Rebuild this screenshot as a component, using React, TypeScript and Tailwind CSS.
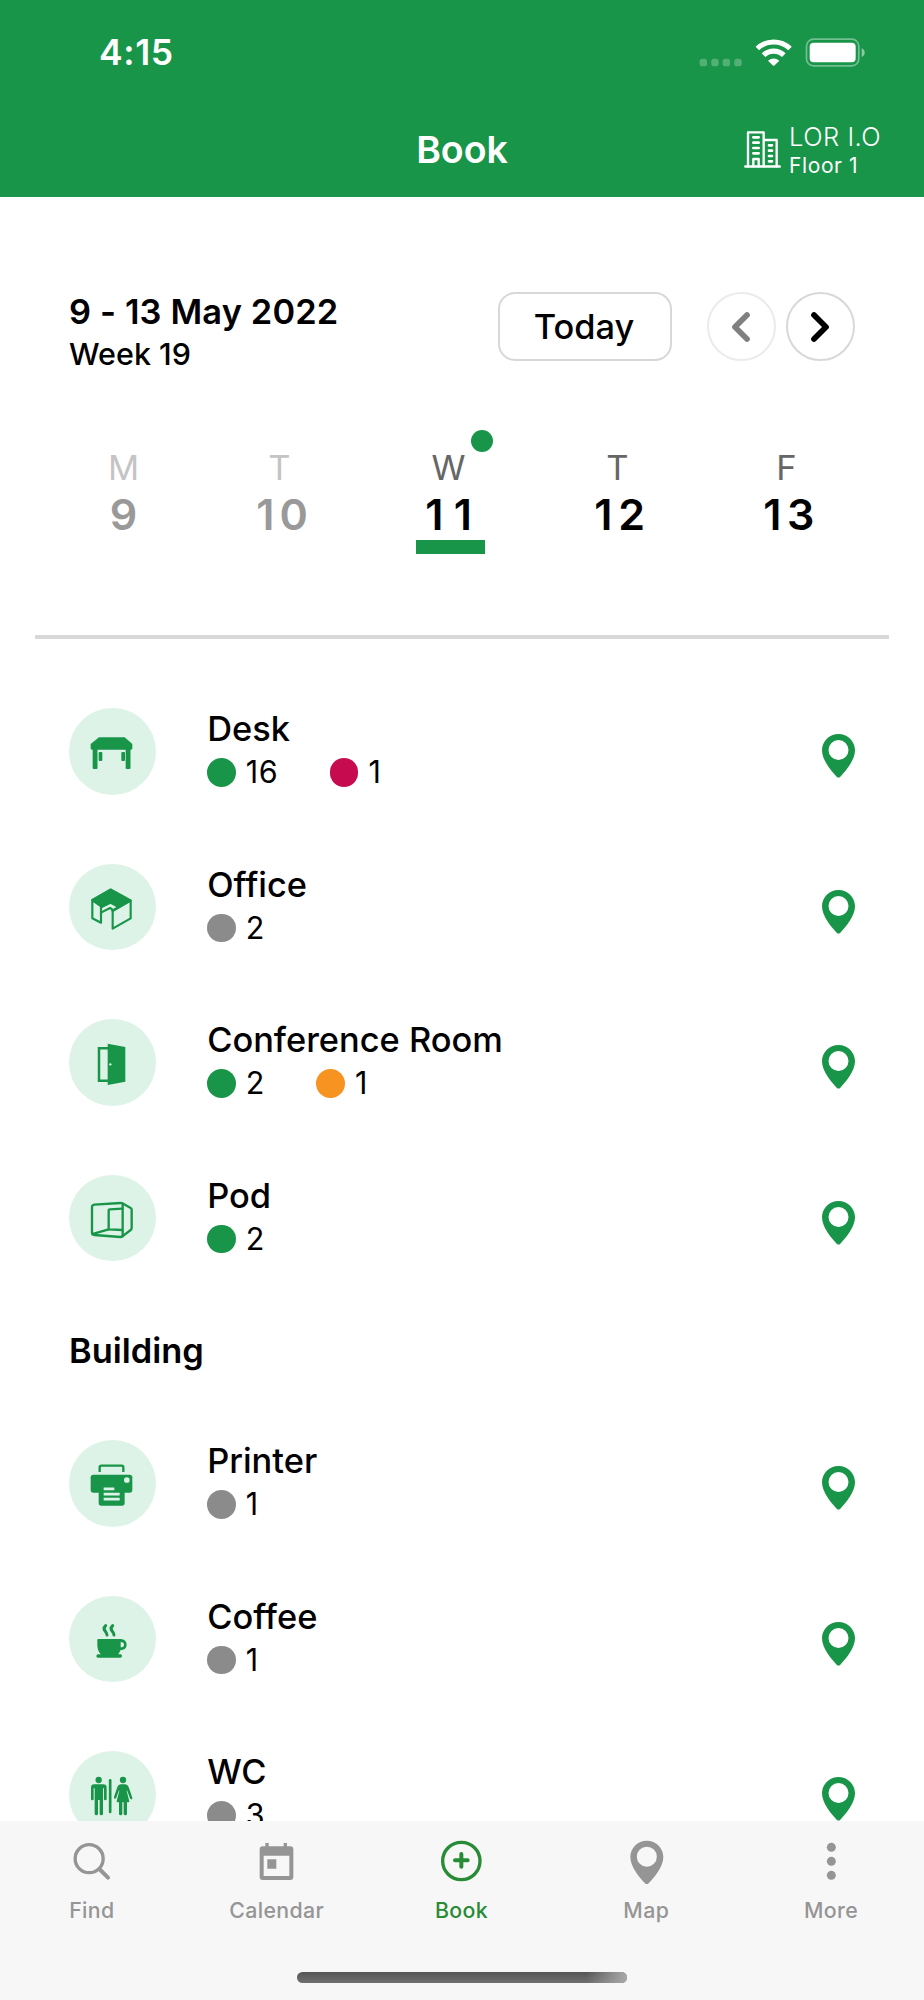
import type { ReactNode } from 'react'

const GREEN = '#189548'
const RED = '#c60b4f'
const ORANGE = '#f79321'
const GRAY = '#8b8b8b'

const PIN_PATH =
    'M49.5 0C22 0 0 22 0 49c0 30 28 62 44 79q5.500 5 11 0c16-17 44-49 44-79C99 22 77 0 49.500 0Zm0 18a30 30 0 1 1 0 60 30 30 0 0 1 0-60Z'

function DeskIcon() {
    return (
        <g fill={GREEN}>
            <path d="M90 88h77l23 20v13q0 4-4 4H69q-4 0-4-4v-13Z" />
            <rect x="71" y="120" width="14.500" height="63" rx="3" />
            <rect x="170" y="120" width="14.500" height="63" rx="3" />
            <rect x="89" y="132" width="11" height="27" rx="3" />
            <rect x="157" y="132" width="11" height="27" rx="3" />
        </g>
    )
}

function OfficeIcon() {
    return (
        <g stroke={GREEN} strokeWidth="6.500" strokeLinejoin="round" fill="none">
            <path d="M70 108 125 76l60 33-55 31 19-11-25-13-26 13-3-3Z" fill={GREEN} />
            <path d="M70 108v55l26 13v-50Z" />
            <path d="M96 151v-5l27-14 8 5" />
            <path d="M131 141v53l54-31v-53Z" />
        </g>
    )
}

function DoorIcon() {
    return (
        <>
            <path d="M118 87.500H90V185h28" stroke={GREEN} strokeWidth="7.500" fill="none" />
            <path d="m116 74 53 10v104l-53 10Z" fill={GREEN} />
            <circle cx="124" cy="136" r="3.500" fill="#def3e7" />
        </>
    )
}

function PodIcon() {
    return (
        <g stroke={GREEN} strokeWidth="7" strokeLinejoin="round" strokeLinecap="round" fill="none">
            <path d="M76 89 155 84q3 0 5 1l25 14q3 2 3 5v56q0 3-3 5l-25 19q-3 2-6 2l-78-6q-7-1-7-7V97q0-7 7-8Z" />
            <path d="M161 86v98" />
            <path d="M160 101l-38 2q-3 0-3 3v57l41 2" />
            <path d="m119 163-47 14" />
        </g>
    )
}

function PrinterIcon() {
    return (
        <>
            <path d="M92 96V82q0-5 5-5h61q5 0 5 5v14" stroke={GREEN} strokeWidth="7" fill="none" />
            <rect x="65" y="104" width="125" height="54" rx="8" fill={GREEN} />
            <rect x="89" y="130" width="78" height="67" rx="8" fill={GREEN} />
            <circle cx="173.500" cy="120" r="8.500" fill="#def3e7" />
            <path d="M104 146.500h32M104 162.500h48M104 177.500h48" stroke="#def3e7" strokeWidth="8" />
        </>
    )
}

function CoffeeIcon() {
    return (
        <>
            <path d="M88 129h67q18 2 18 17t-19 17q-2 7-6 12v3H98q-13-12-13-30v-16q0-3 3-3Z" fill={GREEN} />
            <path d="M155 138q10 0 10 8t-10 8Z" fill="#def3e7" />
            <path d="M87 180h67" stroke={GREEN} strokeWidth="10" strokeLinecap="round" />
            <path
                d="M110 89c-6 6-7 11-1 17q5 5 5 11M131 89c-6 6-7 11-1 17q5 5 5 11"
                stroke={GREEN}
                strokeWidth="9"
                strokeLinecap="round"
                fill="none"
            />
        </>
    )
}

function WcIcon() {
    return (
        <g fill={GREEN}>
            <circle cx="89" cy="87" r="9.500" />
            <path d="M76 100h26q11 0 11 10v35q0 3-4 3t-4-3v-33h-3v76q0 5-5 5t-5-5v-41h-5v41q0 5-5 5t-5-5v-76h-3v33q0 3-4 3t-4-3v-35q0-10 10-10Z" />
            <rect x="119.500" y="84" width="8" height="103" rx="4" />
            <circle cx="162" cy="87" r="9.500" />
            <path d="M155 100h14q7 0 10 8l11 32q1 4-2 5t-5-3l-9-24-1 1 8 32q0 3-3 3h-4v34q0 5-5 5t-5-5v-34h-4v34q0 5-5 5t-5-5v-34h-4q-3 0-3-3l8-32-1-1-8 22q-2 4-5 3t-2-5l10-30q3-8 10-8Z" />
        </g>
    )
}

interface Status {
    color: string
    count: number
}

interface Resource {
    name: string
    icon: ReactNode
    statuses: Status[]
}

const floorResources: Resource[] = [
    { name: 'Desk', icon: <DeskIcon />, statuses: [{ color: GREEN, count: 16 }, { color: RED, count: 1 }] },
    { name: 'Office', icon: <OfficeIcon />, statuses: [{ color: GRAY, count: 2 }] },
    { name: 'Conference Room', icon: <DoorIcon />, statuses: [{ color: GREEN, count: 2 }, { color: ORANGE, count: 1 }] },
    { name: 'Pod', icon: <PodIcon />, statuses: [{ color: GREEN, count: 2 }] },
]

const buildingResources: Resource[] = [
    { name: 'Printer', icon: <PrinterIcon />, statuses: [{ color: GRAY, count: 1 }] },
    { name: 'Coffee', icon: <CoffeeIcon />, statuses: [{ color: GRAY, count: 1 }] },
    { name: 'WC', icon: <WcIcon />, statuses: [{ color: GRAY, count: 3 }] },
]

const days = [
    { letter: 'M', date: '9', past: true },
    { letter: 'T', date: '10', past: true },
    { letter: 'W', date: '11', selected: true },
    { letter: 'T', date: '12' },
    { letter: 'F', date: '13' },
]

function ResourceRow({ resource }: { resource: Resource }) {
    return (
        <li className="flex h-[155.5px] items-start">
            <div className="size-[86.67px] shrink-0 rounded-full bg-[#def3e7]">
                <svg viewBox="0 0 260 260" className="size-full">
                    {resource.icon}
                </svg>
            </div>
            <div className="ml-[51.500px] flex-1">
                <h3 className="text-[34.4px] leading-[42px] font-medium">{resource.name}</h3>
                <div className="flex h-[43px] items-center gap-[51.500px]">
                    {resource.statuses.map((status) => (
                        <div key={status.color} className="flex items-center gap-[10px]">
                            <span className="mt-[2px] size-[28.5px] rounded-full" style={{ background: status.color }} />
                            <span className="text-[30.5px] leading-[43px] tracking-[0.7px]">{status.count}</span>
                        </div>
                    ))}
                </div>
            </div>
            <svg viewBox="0 0 99 132" className="mt-[26px] h-[44px] w-[33px]" fill={GREEN}>
                <path d={PIN_PATH} />
            </svg>
        </li>
    )
}

const tabs = [
    {
        label: 'Find',
        icon: (
            <g fill="none" stroke="currentColor" strokeLinecap="round">
                <circle cx="57.500" cy="56" r="42" strokeWidth="10" />
                <path d="m88 87 26 26" strokeWidth="12" />
            </g>
        ),
    },
    {
        label: 'Calendar',
        icon: (
            <path
                fillRule="evenodd"
                d="M31 9h10v10h45V9h10v10h10q9 0 9 9v83q0 9-9 9H23q-9 0-9-9V28q0-9 9-9h8ZM26 47v61h77V47Zm11 11h27v28H37Z"
            />
        ),
    },
    {
        label: 'Book',
        active: true,
        icon: (
            <g fill="none" stroke="currentColor">
                <circle cx="64" cy="63" r="56" strokeWidth="10" />
                <path d="M64 42v38M45 61h38" strokeWidth="12" strokeLinecap="round" />
            </g>
        ),
    },
    { label: 'Map', icon: <path d={PIN_PATH} transform="translate(16 2)" /> },
    {
        label: 'More',
        icon: (
            <>
                <circle cx="64" cy="22" r="13.500" />
                <circle cx="64" cy="64" r="13.500" />
                <circle cx="64" cy="106" r="13.500" />
            </>
        ),
    },
]

export default function App() {
    return (
        <div className="flex h-[2000px] w-[924px] flex-col overflow-hidden bg-white font-['Inter',sans-serif] text-black">
            {/* Header */}
            <header className="h-[197px] shrink-0 bg-[#189548] text-white">
                <div className="flex h-[106px] items-center justify-between pr-[56px] pl-[99px]">
                    <span className="text-[35.5px] font-semibold tracking-[0.6px]">4:15</span>
                    <svg viewBox="700 110 520 90" className="mb-[3px] h-[30px] w-[173.33px]" fill="#fff">
                        <g opacity=".25">
                            <rect x="714" y="175" width="22" height="23" rx="8" />
                            <rect x="749" y="175" width="22" height="23" rx="8" />
                            <rect x="783" y="175" width="22" height="23" rx="8" />
                            <rect x="818" y="175" width="22" height="23" rx="8" />
                        </g>
                        <g fill="none" stroke="#fff" strokeWidth="15.500">
                            <path d="M887 144.500a71 71 0 0 1 98 0" />
                            <path d="M905.500 164.500a44 44 0 0 1 61 0" />
                        </g>
                        <path d="M919 181q17-13 34 0l-14 14q-3 3-6 0Z" />
                        <rect x="1034.500" y="116.500" width="157" height="80" rx="21" fill="none" stroke="#fff" strokeWidth="5" opacity=".4" />
                        <rect x="1044" y="127" width="138" height="59" rx="12" />
                        <path d="M1200 144q9 4 9 13t-9 13Z" opacity=".5" />
                    </svg>
                </div>
                <div className="grid h-[91px] grid-cols-3 items-start">
                    <h1 className="col-start-2 mt-[20px] text-center text-[37.5px] leading-[47px] font-semibold">Book</h1>
                    <div className="mt-[15px] flex justify-self-end pr-[43px]">
                        <svg
                            viewBox="0 0 111 111"
                            className="mt-[10px] mr-[8px] size-[37px]"
                            fill="none"
                            stroke="#fff"
                            strokeWidth="7"
                            strokeLinecap="round"
                            strokeLinejoin="round"
                        >
                            <path d="M12 106V4h47v102M60 27h38v79M28 106V84h16v22" />
                            <path d="M4 106.500h103" strokeWidth="7.500" />
                            <path d="M28 19h16M28 35h16M28 51h16M28 67h16M75 43h9M75 59h9M75 75h9M75 91h9" strokeWidth="8" />
                        </svg>
                        <div>
                            <p className="text-[25.5px] leading-[31px] font-light tracking-[0.5px]">LOR I.O</p>
                            <p className="text-[21px] leading-[27px] tracking-[0.6px]">Floor 1</p>
                        </div>
                    </div>
                </div>
            </header>

            <main className="min-h-0 flex-1 overflow-hidden">
                {/* Week picker */}
                <section className="flex items-start pt-[95px] pr-[69px] pl-[69px]">
                    <div className="flex-1">
                        <h2 className="text-[34.4px] leading-[40px] font-semibold tracking-[0.15px]">9 - 13 May 2022</h2>
                        <p className="mt-px text-[30.5px] leading-[42px] font-[450]">Week 19</p>
                    </div>
                    <button className="h-[69px] w-[174px] rounded-[17px] border-2 border-[#d8d8d8] pr-[2px] text-[34.4px] font-medium">
                        Today
                    </button>
                    <button className="ml-[35px] flex size-[69px] items-center justify-center rounded-full border-2 border-[#ebebeb]">
                        <svg viewBox="0 0 54 90" className="mr-[2px] h-[30px] w-[18px]" fill="none" stroke="#808080" strokeWidth="17" strokeLinecap="round" strokeLinejoin="round">
                            <path d="M45 9 9 45l36 36" />
                        </svg>
                    </button>
                    <button className="ml-[10px] flex size-[69px] items-center justify-center rounded-full border-2 border-[#d8d8d8]">
                        <svg viewBox="0 0 54 90" className="mr-[2px] h-[30px] w-[18px]" fill="none" stroke="#000" strokeWidth="17" strokeLinecap="round" strokeLinejoin="round">
                            <path d="m9 9 36 36L9 81" />
                        </svg>
                    </button>
                </section>

                {/* Days */}
                <section className="mt-[72.500px] flex pl-[54px]">
                    {days.map((day) => (
                        <div
                            key={day.date}
                            className={`flex flex-col items-center ${day.date === '9' ? 'w-[143px]' : 'w-[169px]'}`}
                        >
                            <div className="relative w-[69px] text-center">
                                <p
                                    className={`mr-[4px] text-[34.5px] leading-[40px] ${day.past ? 'text-[#c4c4c4]' : 'text-[#666]'}`}
                                >
                                    {day.letter}
                                </p>
                                {day.selected && (
                                    <span className="absolute -top-[18px] left-[55px] size-[22px] rounded-full bg-[#189548]" />
                                )}
                            </div>
                            {/* every digit gets the same width */}
                            <p
                                className={`mr-[4px] flex text-[43px] leading-[52px] font-semibold ${day.past ? 'text-[#999]' : ''}`}
                            >
                                {day.date.split('').map((digit, i) => (
                                    <span key={i} className="w-[28.5px] text-center">
                                        {digit}
                                    </span>
                                ))}
                            </p>
                            {day.selected && <div className="h-[14px] w-[69px] bg-[#189548]" />}
                        </div>
                    ))}
                </section>

                <div className="mx-[35px] mt-[81.500px] h-[4px] bg-[#d8d8d8]" />

                {/* Resources */}
                <section className="pt-[69px] pr-[69px] pl-[69px]">
                    <ul>
                        {floorResources.map((resource) => (
                            <ResourceRow key={resource.name} resource={resource} />
                        ))}
                    </ul>
                    <h2 className="h-[110px] text-[34.4px] leading-[41px] font-semibold">Building</h2>
                    <ul>
                        {buildingResources.map((resource) => (
                            <ResourceRow key={resource.name} resource={resource} />
                        ))}
                    </ul>
                </section>
            </main>

            {/* Tab bar */}
            <footer className="flex h-[179px] shrink-0 flex-col items-center bg-[#f7f7f7]">
                <nav className="grid w-full grid-cols-5 pt-[19px]">
                    {tabs.map((tab) => (
                        <a
                            key={tab.label}
                            className={`flex flex-col items-center ${tab.active ? 'text-[#278c35]' : 'text-[#959595]'}`}
                        >
                            <svg viewBox="0 0 132 132" className="size-[44px]" fill="currentColor">
                                {tab.icon}
                            </svg>
                            <span className="mt-[11px] mr-px text-[21.3px] leading-[30px] font-medium tracking-[0.4px]">{tab.label}</span>
                        </a>
                    ))}
                </nav>
                <div className="mt-[47px] flex h-[11px] w-[330px] overflow-hidden rounded-full bg-linear-to-b from-[#555] to-[#707070]">
                    <span className="ml-auto w-[40px] bg-linear-to-r from-transparent to-[#aaa]" />
                </div>
            </footer>
        </div>
    )
}
